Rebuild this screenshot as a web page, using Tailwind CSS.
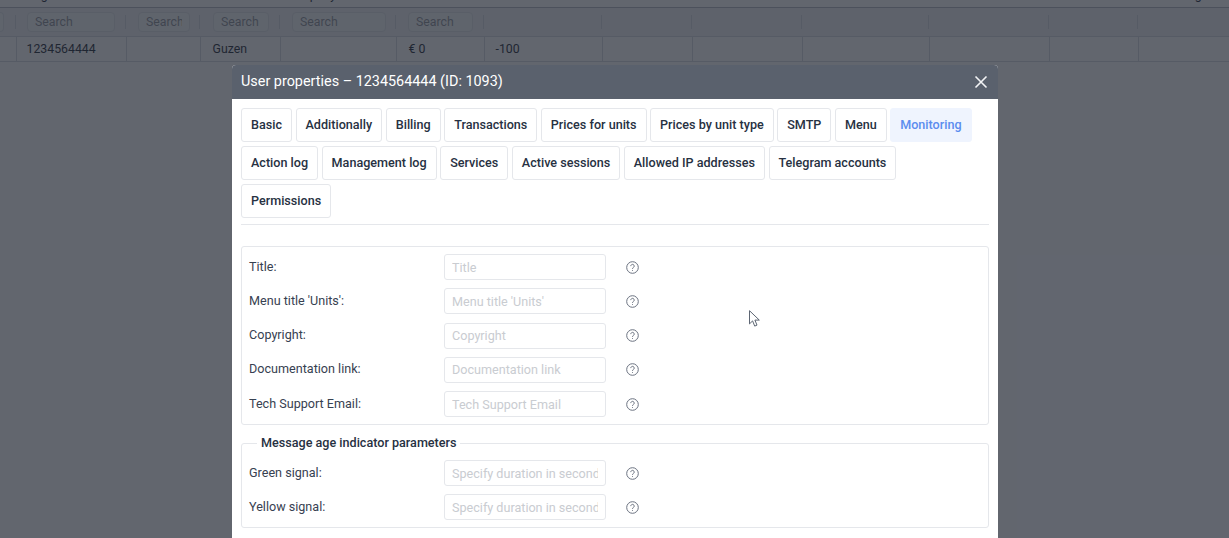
<!DOCTYPE html>
<html lang="en">
<head>
    <meta charset="UTF-8" />
    <title>User properties</title>
    <script src="https://cdn.jsdelivr.net/npm/@tailwindcss/browser@4"></script>
</head>
<body class="relative h-[538px] w-[1229px] overflow-hidden bg-white font-['Roboto',sans-serif] text-[12.6px] text-[#1f2937]">
    <!-- table behind the dialog -->
    <table class="w-full table-fixed border-collapse text-[12.3px]">
        <colgroup>
            <col class="w-[16px]"><col class="w-[110px]"><col class="w-[74px]"><col class="w-[80px]"><col class="w-[116px]"><col class="w-[88px]"><col class="w-[118px]"><col class="w-[90px]"><col class="w-[110px]"><col class="w-[127px]"><col class="w-[120px]"><col class="w-[89px]"><col>
        </colgroup>
        <tbody>
            <tr class="h-[7px] border-b border-[#b4b9c4]">
                <td></td>
                <td class="pl-[11px]"><div class="h-[7px] overflow-hidden"><div class="-mt-[13px] leading-[16px]">Login</div></div></td>
                <td></td>
                <td></td>
                <td class="pl-[4px]"><div class="h-[7px] overflow-hidden"><div class="-mt-[13px] leading-[16px]">Company</div></div></td>
                <td></td><td></td><td></td><td></td><td></td><td></td><td></td>
                <td class="pl-[25px]"><div class="h-[7px] overflow-hidden"><div class="-mt-[13px] leading-[16px]">Settings</div></div></td>
            </tr>
            <tr class="h-[29px] border-b border-[#d5d9e0] bg-[#f1f2f4]">
                <td class="relative after:absolute after:right-0 after:top-[7px] after:h-[14px] after:w-px after:bg-[#d5d9e0]"><div class="h-[20px] w-[4px] rounded-r-sm border-y border-r border-[#e0e3e8] bg-[#f6f7f8]"></div></td>
                <td class="relative pl-[11px] after:absolute after:right-0 after:top-[7px] after:h-[14px] after:w-px after:bg-[#d5d9e0]"><input class="block h-[20px] w-[88px] rounded-sm border border-[#e0e3e8] bg-[#f6f7f8] px-[7px]" placeholder="Search"></td>
                <td class="relative pl-[12px] after:absolute after:right-0 after:top-[7px] after:h-[14px] after:w-px after:bg-[#d5d9e0]"><input class="block h-[20px] w-[52px] rounded-sm border border-[#e0e3e8] bg-[#f6f7f8] px-[7px]" placeholder="Search"></td>
                <td class="relative pl-[13px] after:absolute after:right-0 after:top-[7px] after:h-[14px] after:w-px after:bg-[#d5d9e0]"><input class="block h-[20px] w-[56px] rounded-sm border border-[#e0e3e8] bg-[#f6f7f8] px-[7px]" placeholder="Search"></td>
                <td class="relative pl-[12px] after:absolute after:right-0 after:top-[7px] after:h-[14px] after:w-px after:bg-[#d5d9e0]"><input class="block h-[20px] w-[94px] rounded-sm border border-[#e0e3e8] bg-[#f6f7f8] px-[7px]" placeholder="Search"></td>
                <td class="relative pl-[12px] after:absolute after:right-0 after:top-[7px] after:h-[14px] after:w-px after:bg-[#d5d9e0]"><input class="block h-[20px] w-[65px] rounded-sm border border-[#e0e3e8] bg-[#f6f7f8] px-[7px]" placeholder="Search"></td>
                <td class="relative after:absolute after:right-0 after:top-[7px] after:h-[14px] after:w-px after:bg-[#d5d9e0]"></td>
                <td class="relative after:absolute after:right-0 after:top-[7px] after:h-[14px] after:w-px after:bg-[#d5d9e0]"></td>
                <td class="relative after:absolute after:right-0 after:top-[7px] after:h-[14px] after:w-px after:bg-[#d5d9e0]"></td>
                <td class="relative after:absolute after:right-0 after:top-[7px] after:h-[14px] after:w-px after:bg-[#d5d9e0]"></td>
                <td class="relative after:absolute after:right-0 after:top-[7px] after:h-[14px] after:w-px after:bg-[#d5d9e0]"></td>
                <td class="relative after:absolute after:right-0 after:top-[7px] after:h-[14px] after:w-px after:bg-[#d5d9e0]"></td>
                <td></td>
            </tr>
            <tr class="h-[25px] border-b border-[#d5d9e0]">
                <td class="border-r border-[#d5d9e0]"></td>
                <td class="border-r border-[#d5d9e0] pl-[10px]">1234564444</td>
                <td class="border-r border-[#d5d9e0]"></td>
                <td class="border-r border-[#d5d9e0] pl-[12px]">Guzen</td>
                <td class="border-r border-[#d5d9e0]"></td>
                <td class="border-r border-[#d5d9e0] pl-[12px]">€ 0</td>
                <td class="border-r border-[#d5d9e0] pl-[11px]">-100</td>
                <td class="border-r border-[#d5d9e0]"></td>
                <td class="border-r border-[#d5d9e0]"></td>
                <td class="border-r border-[#d5d9e0]"></td>
                <td class="border-r border-[#d5d9e0]"></td>
                <td class="border-r border-[#d5d9e0]"></td>
                <td></td>
            </tr>
        </tbody>
    </table>

    <div class="absolute inset-0 bg-[#1f2531]/70"></div>

    <!-- dialog -->
    <div class="absolute left-[232px] top-[65px] w-[766px] rounded-t-[4px] bg-white">
        <div class="flex h-[34px] items-center justify-between rounded-t-[4px] bg-[#5a616d] pl-[9px] pr-[10px] text-[14.4px] text-white">
            <span>User properties – 1234564444 (ID: 1093)</span>
            <svg class="h-[14px] w-[14px]" viewBox="0 0 14 14" fill="none" stroke="#f3f4f6" stroke-width="1.6"><path d="M1.5 1.5l11 11M12.5 1.5l-11 11"/></svg>
        </div>
        <div class="px-[9px] pt-[9px]">
            <div class="flex flex-col gap-[4px] border-b border-[#e5e7eb] pb-[6px] font-medium text-[#273142]">
                <div class="flex gap-[3.5px]">
                    <button class="h-[34px] rounded-[3px] border border-[#e5e7eb] px-[9px]">Basic</button>
                    <button class="h-[34px] rounded-[3px] border border-[#e5e7eb] px-[9px]">Additionally</button>
                    <button class="h-[34px] rounded-[3px] border border-[#e5e7eb] px-[9px]">Billing</button>
                    <button class="h-[34px] rounded-[3px] border border-[#e5e7eb] px-[9px]">Transactions</button>
                    <button class="h-[34px] rounded-[3px] border border-[#e5e7eb] px-[9px]">Prices for units</button>
                    <button class="h-[34px] rounded-[3px] border border-[#e5e7eb] px-[9px]">Prices by unit type</button>
                    <button class="h-[34px] rounded-[3px] border border-[#e5e7eb] px-[9px]">SMTP</button>
                    <button class="h-[34px] rounded-[3px] border border-[#e5e7eb] px-[9px]">Menu</button>
                    <button class="h-[34px] rounded-[3px] border border-[#eff4fe] bg-[#eff4fe] px-[9px] text-[#5b8def]">Monitoring</button>
                </div>
                <div class="flex gap-[3.5px]">
                    <button class="h-[34px] rounded-[3px] border border-[#e5e7eb] px-[9px]">Action log</button>
                    <button class="h-[34px] rounded-[3px] border border-[#e5e7eb] px-[9px]">Management log</button>
                    <button class="h-[34px] rounded-[3px] border border-[#e5e7eb] px-[9px]">Services</button>
                    <button class="h-[34px] rounded-[3px] border border-[#e5e7eb] px-[9px]">Active sessions</button>
                    <button class="h-[34px] rounded-[3px] border border-[#e5e7eb] px-[9px]">Allowed IP addresses</button>
                    <button class="h-[34px] rounded-[3px] border border-[#e5e7eb] px-[9px]">Telegram accounts</button>
                </div>
                <div class="flex gap-[3.5px]">
                    <button class="h-[34px] rounded-[3px] border border-[#e5e7eb] px-[9px]">Permissions</button>
                </div>
            </div>

            <div class="mt-[21px] flex flex-col gap-[8.25px] rounded-[3px] border border-[#e5e7eb] px-[7px] pt-[7px] pb-[7px] text-[#374151]">
                <div class="flex h-[26px] items-center"><label class="w-[195px]">Title:</label><input class="h-[26px] w-[162px] rounded-[3px] border border-[#e5e7eb] px-[7px] placeholder-[#c9ccd1]" placeholder="Title"><svg class="ml-[20px] h-[13px] w-[13px]" viewBox="0 0 13 13" fill="none" stroke="#6b7280"><circle cx="6.5" cy="6.5" r="5.8"/><path d="M4.8 5.1a1.7 1.7 0 1 1 2.6 1.4c-.6.4-.9.7-.9 1.4M6.5 9.2v.8"/></svg></div>
                <div class="flex h-[26px] items-center"><label class="w-[195px]">Menu title 'Units':</label><input class="h-[26px] w-[162px] rounded-[3px] border border-[#e5e7eb] px-[7px] placeholder-[#c9ccd1]" placeholder="Menu title 'Units'"><svg class="ml-[20px] h-[13px] w-[13px]" viewBox="0 0 13 13" fill="none" stroke="#6b7280"><circle cx="6.5" cy="6.5" r="5.8"/><path d="M4.8 5.1a1.7 1.7 0 1 1 2.6 1.4c-.6.4-.9.7-.9 1.4M6.5 9.2v.8"/></svg></div>
                <div class="flex h-[26px] items-center"><label class="w-[195px]">Copyright:</label><input class="h-[26px] w-[162px] rounded-[3px] border border-[#e5e7eb] px-[7px] placeholder-[#c9ccd1]" placeholder="Copyright"><svg class="ml-[20px] h-[13px] w-[13px]" viewBox="0 0 13 13" fill="none" stroke="#6b7280"><circle cx="6.5" cy="6.5" r="5.8"/><path d="M4.8 5.1a1.7 1.7 0 1 1 2.6 1.4c-.6.4-.9.7-.9 1.4M6.5 9.2v.8"/></svg></div>
                <div class="flex h-[26px] items-center"><label class="w-[195px]">Documentation link:</label><input class="h-[26px] w-[162px] rounded-[3px] border border-[#e5e7eb] px-[7px] placeholder-[#c9ccd1]" placeholder="Documentation link"><svg class="ml-[20px] h-[13px] w-[13px]" viewBox="0 0 13 13" fill="none" stroke="#6b7280"><circle cx="6.5" cy="6.5" r="5.8"/><path d="M4.8 5.1a1.7 1.7 0 1 1 2.6 1.4c-.6.4-.9.7-.9 1.4M6.5 9.2v.8"/></svg></div>
                <div class="flex h-[26px] items-center"><label class="w-[195px]">Tech Support Email:</label><input class="h-[26px] w-[162px] rounded-[3px] border border-[#e5e7eb] px-[7px] placeholder-[#c9ccd1]" placeholder="Tech Support Email"><svg class="ml-[20px] h-[13px] w-[13px]" viewBox="0 0 13 13" fill="none" stroke="#6b7280"><circle cx="6.5" cy="6.5" r="5.8"/><path d="M4.8 5.1a1.7 1.7 0 1 1 2.6 1.4c-.6.4-.9.7-.9 1.4M6.5 9.2v.8"/></svg></div>
            </div>

            <fieldset class="mt-[11px] rounded-[3px] border border-[#e5e7eb] px-[7px] pb-[7px] text-[#374151]">
                <legend class="ml-[8px] px-[4px] font-medium leading-[14px] text-[#273142]">Message age indicator parameters</legend>
                <div class="mt-[10px] flex flex-col gap-[8px]">
                    <div class="flex h-[26px] items-center"><label class="w-[195px]">Green signal:</label><input class="h-[26px] w-[162px] rounded-[3px] border border-[#e5e7eb] px-[7px] placeholder-[#c9ccd1]" placeholder="Specify duration in seconds"><svg class="ml-[20px] h-[13px] w-[13px]" viewBox="0 0 13 13" fill="none" stroke="#6b7280"><circle cx="6.5" cy="6.5" r="5.8"/><path d="M4.8 5.1a1.7 1.7 0 1 1 2.6 1.4c-.6.4-.9.7-.9 1.4M6.5 9.2v.8"/></svg></div>
                    <div class="flex h-[26px] items-center"><label class="w-[195px]">Yellow signal:</label><input class="h-[26px] w-[162px] rounded-[3px] border border-[#e5e7eb] px-[7px] placeholder-[#c9ccd1]" placeholder="Specify duration in seconds"><svg class="ml-[20px] h-[13px] w-[13px]" viewBox="0 0 13 13" fill="none" stroke="#6b7280"><circle cx="6.5" cy="6.5" r="5.8"/><path d="M4.8 5.1a1.7 1.7 0 1 1 2.6 1.4c-.6.4-.9.7-.9 1.4M6.5 9.2v.8"/></svg></div>
                </div>
            </fieldset>
            <div class="h-[20px]"></div>
        </div>
    </div>

    <!-- mouse pointer -->
    <svg class="absolute left-[749px] top-[310px] h-[18px] w-[12px]" viewBox="0 0 12 18" fill="#fff" stroke="#4b5563" stroke-width="0.9"><path d="M.5.7v13.2l3.1-3 2.1 5.2 2.3-1-2.1-5h4.4z"/></svg>
</body>
</html>
